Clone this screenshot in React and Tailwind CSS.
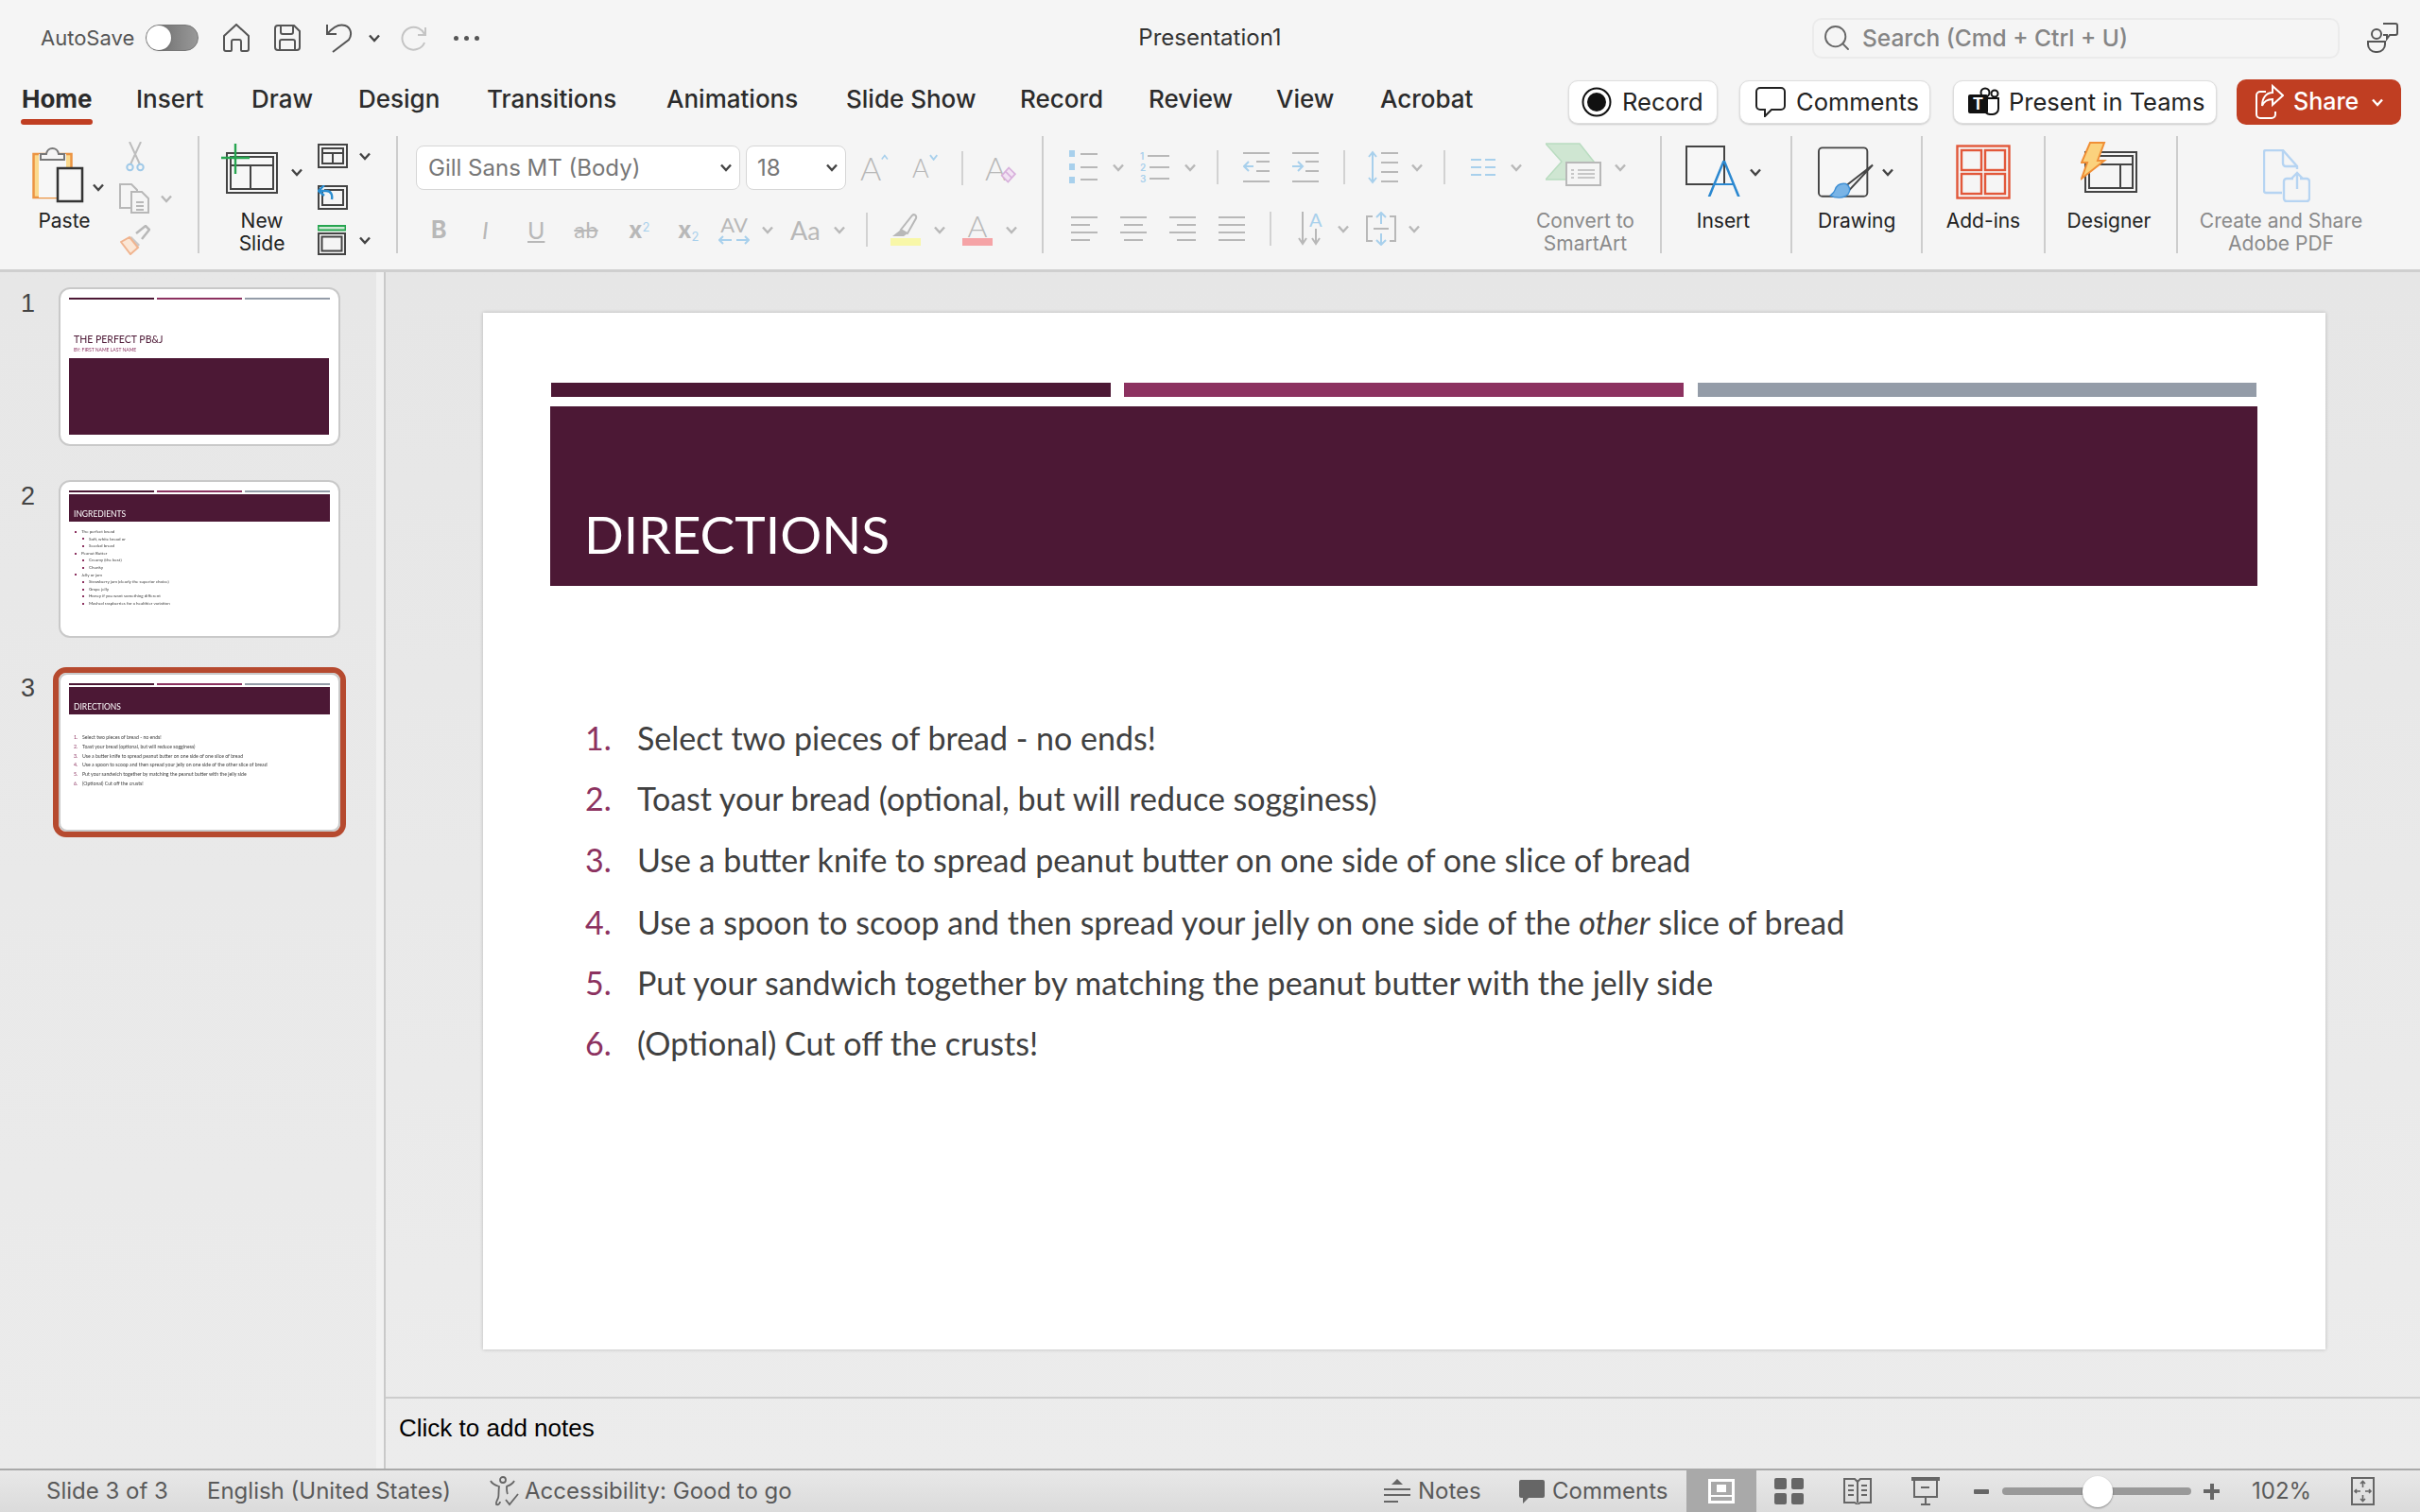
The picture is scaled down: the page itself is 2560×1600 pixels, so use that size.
import React from "react";
import { Search } from "lucide-react";

const GREY = "#b8b8b8";
const BLUE = "#a8d0ec";

const Chev = ({ c = "#444", className = "" }) => (
  <svg width="12" height="9" viewBox="0 0 12 9" className={`shrink-0 ${className}`}>
    <polyline points="1,1.5 6,7 11,1.5" fill="none" stroke={c} strokeWidth="2.4" />
  </svg>
);

const VSep = ({ className = "" }) => <div className={`w-[2px] h-[36px] shrink-0 bg-[#d2d2d2] ${className}`} />;
const GroupSep = () => <div className="w-[2px] h-[124px] mt-[9px] shrink-0 bg-[#cdcdcd]" />;

/* ---- title bar icons ---- */
const HomeIcon = () => (
  <svg width="28" height="30" viewBox="0 0 28 30" className="ml-[26px]" fill="none" stroke="#555" strokeWidth="2">
    <path d="M1 13 14 1l13 12v14a2 2 0 0 1-2 2h-5a1 1 0 0 1-1-1v-9a2 2 0 0 0-2-2h-6a2 2 0 0 0-2 2v9a1 1 0 0 1-1 1H3a2 2 0 0 1-2-2Z" />
  </svg>
);
const SaveIcon = () => (
  <svg width="28" height="28" viewBox="0 0 28 28" className="ml-[26px]" fill="none" stroke="#555" strokeWidth="2">
    <path d="M4 1h17l6 6v17a3 3 0 0 1-3 3H4a3 3 0 0 1-3-3V4a3 3 0 0 1 3-3Z" />
    <path d="M7 1v7a2 2 0 0 0 2 2h9a2 2 0 0 0 2-2V1M6 27v-9a2 2 0 0 1 2-2h12a2 2 0 0 1 2 2v9" />
  </svg>
);
const UndoIcon = () => (
  <svg width="28" height="32" viewBox="0 0 28 32" className="ml-[27px]" fill="none" stroke="#555" strokeWidth="2">
    <path d="M1 2v10h10M1 12C7 5 14 1 20 3c6 2 8 9 4 15L7 31" />
  </svg>
);
const RedoIcon = () => (
  <svg width="28" height="30" viewBox="0 0 28 30" className="ml-[22px]" fill="none" stroke="#c4c4c4" strokeWidth="2">
    <path d="M26 4v8h-8M25 11C22 5 16 3 11 4 4 6 0 12 2 19c2 7 9 10 15 8 4-1 7-4 8-7" />
  </svg>
);
const PersonChat = () => (
  <svg width="33" height="32" viewBox="0 0 33 32" className="ml-[29px]" fill="none" stroke="#555" strokeWidth="2">
    <circle cx="10" cy="12" r="5" />
    <path d="M1 20h18v3a8 8 0 0 1-8 8H9a8 8 0 0 1-8-8ZM17 1h13a2 2 0 0 1 2 2v8a2 2 0 0 1-2 2h-6l-3 4v-4h-4" />
  </svg>
);

/* ---- tab row button icons ---- */
const RecordIcon = () => (
  <svg width="32" height="32" viewBox="0 0 32 32" fill="none">
    <circle cx="16" cy="16" r="14.5" stroke="#111" strokeWidth="2" />
    <circle cx="16" cy="16" r="10" fill="#111" />
  </svg>
);
const CommentIcon = () => (
  <svg width="32" height="32" viewBox="0 0 32 32" fill="none" stroke="#222" strokeWidth="2">
    <path d="M5 1h22a4 4 0 0 1 4 4v15a4 4 0 0 1-4 4H17l-7 7v-7H5a4 4 0 0 1-4-4V5a4 4 0 0 1 4-4Z" />
  </svg>
);
const TeamsIcon = () => (
  <svg width="34" height="32" viewBox="0 0 34 32" fill="none">
    <circle cx="18" cy="6" r="4.5" stroke="#111" strokeWidth="2" />
    <circle cx="28" cy="7" r="3.5" stroke="#111" strokeWidth="2" />
    <path d="M17 12h15v11a6 6 0 0 1-6 6h-3a7 7 0 0 1-6-5" stroke="#111" strokeWidth="2" />
    <rect x="0" y="8" width="21" height="20" rx="2" fill="#111" />
    <text x="10.5" y="24" textAnchor="middle" fontSize="17" fontWeight="700" fontFamily="Inter, sans-serif" fill="#fff">T</text>
  </svg>
);
const ShareIcon = () => (
  <svg width="30" height="40" viewBox="0 0 30 40" fill="none" stroke="#fff" strokeWidth="2" className="shrink-0">
    <path d="M11 9H5a4 4 0 0 0-4 4v20a4 4 0 0 0 4 4h12a4 4 0 0 0 4-4v-3" />
    <path d="M18 3l11 10-11 10v-6c-6 0-9 2-11 7 0-8 4-14 11-14Z" />
  </svg>
);

/* ---- clipboard ---- */
const PasteIcon = () => (
  <svg width="56" height="62" viewBox="0 0 56 62" fill="none">
    <rect x="1.5" y="10" width="40" height="46" fill="#fbd98d" stroke="#ec9442" strokeWidth="2.5" />
    <rect x="7" y="10" width="29" height="46" fill="#f7f7f7" />
    <path d="M9 16v-6h6c1-8 12-8 13 0h6v6Z" fill="#f5f5f5" stroke="#777" strokeWidth="2" />
    <rect x="27" y="25" width="26" height="35" fill="#f7f7f7" stroke="#333" strokeWidth="2.5" />
  </svg>
);
const ScissorsIcon = () => (
  <svg width="20" height="32" viewBox="0 0 20 32" fill="none" className="ml-[31px]">
    <path d="M4 0l11 24M16 0 5 24" stroke="#bdbdbd" strokeWidth="2" />
    <circle cx="4.5" cy="27" r="3.2" stroke="#9fc9e8" strokeWidth="2" />
    <circle cx="15.5" cy="27" r="3.2" stroke="#9fc9e8" strokeWidth="2" />
  </svg>
);
const CopyIcon = () => (
  <svg width="32" height="32" viewBox="0 0 32 32" fill="none" stroke={GREY} strokeWidth="2">
    <path d="M13 26H1V1h12l6 6v2" />
    <path d="M13 9h11l7 7v15H13Z" fill="#f5f5f5" />
    <path d="M18 20h8M18 24h8M18 28h8" />
  </svg>
);
const PainterIcon = () => (
  <svg width="32" height="32" viewBox="0 0 32 32" fill="none" className="ml-[25px] mt-[12px]">
    <path d="M17 9 27 1l4 4-8 10" stroke={GREY} strokeWidth="2.5" />
    <path d="M12 12l9 9-3 3-9-9Z" fill="#c9c9c9" />
    <path d="M1 18l9-5 9 11-8 7Z" fill="#fbe7d6" stroke="#f0b48f" strokeWidth="2" />
  </svg>
);

/* ---- slides group ---- */
const NewSlideIcon = () => (
  <svg width="60" height="56" viewBox="0 0 60 56" fill="none">
    <rect x="6" y="12" width="53" height="42" stroke="#444" strokeWidth="2" fill="#f7f7f7" />
    <rect x="10" y="16" width="45" height="34" stroke="#444" strokeWidth="2" />
    <path d="M10 25h45M31 25v25" stroke="#444" strokeWidth="2" />
    <path d="M0 17h30M15 2v32" stroke="#27a550" strokeWidth="2.4" />
  </svg>
);
const LayoutIcon = () => (
  <svg width="32" height="26" viewBox="0 0 32 26" fill="none" stroke="#444" strokeWidth="2">
    <rect x="1" y="1" width="30" height="24" />
    <rect x="5" y="5" width="22" height="16" />
    <path d="M5 10h22M16 10v11" />
  </svg>
);
const ResetIcon = () => (
  <svg width="32" height="26" viewBox="0 0 32 26" fill="none">
    <rect x="1" y="1" width="30" height="24" stroke="#444" strokeWidth="2" />
    <rect x="5" y="5" width="22" height="16" stroke="#444" strokeWidth="2" />
    <path d="M7 0 1 6l6 5M1 6h8c5 0 7 4 6 9" stroke="#2a8dd0" strokeWidth="2.4" fill="#f5f5f5" />
  </svg>
);
const SectionIcon = () => (
  <svg width="30" height="32" viewBox="0 0 30 32" fill="none">
    <rect x="0.5" y="1" width="29" height="4.5" stroke="#27a550" strokeWidth="2" fill="#cfe9d6" />
    <rect x="1" y="9" width="28" height="22" stroke="#444" strokeWidth="2" />
    <rect x="4.5" y="12.5" width="21" height="15" stroke="#444" strokeWidth="2" />
  </svg>
);

/* ---- font group extras ---- */
const Caret = ({ up }) => (
  <svg width="10" height="7" viewBox="0 0 10 7" className="self-start mt-[2px]">
    <polyline points={up ? "1,6 5,1 9,6" : "1,1 5,6 9,1"} fill="none" stroke={BLUE} strokeWidth="2" />
  </svg>
);
const Eraser = () => (
  <svg width="20" height="20" viewBox="0 0 20 20" className="ml-[-6px] self-end" fill="none">
    <path d="M11 1l8 8-9 10-8-8Z" stroke="#d8b0dc" strokeWidth="2" fill="#f2e3f3" />
    <path d="M7 6l8 8" stroke="#d8b0dc" strokeWidth="2" />
  </svg>
);
const Highlighter = () => (
  <svg width="32" height="34" viewBox="0 0 32 34" className="ml-[24px]" fill="none">
    <path d="M11 17 23 2c2-2 5 0 4 3L18 21Z" stroke={GREY} strokeWidth="2" />
    <path d="M11 17l7 4-4 3H2Z" fill={GREY} />
    <rect x="0" y="26" width="32" height="8" fill="#f8f7a8" />
  </svg>
);

/* ---- paragraph icons ---- */
const Lines = ({ d, className = "" }) => (
  <svg width="28" height="28" viewBox="0 0 28 28" className={className} fill="none" stroke={GREY} strokeWidth="2">
    <path d={d} />
  </svg>
);
const Bullets = () => (
  <svg width="30" height="36" viewBox="0 0 30 36" fill="none">
    <path d="M12 4h18M12 18h18M12 31h18" stroke={GREY} strokeWidth="2" />
    <rect x="0" y="0" width="6" height="7" fill={BLUE} />
    <rect x="0" y="14" width="6" height="7" fill={BLUE} />
    <rect x="0" y="28" width="6" height="7" fill={BLUE} />
  </svg>
);
const Numbers = () => (
  <div className="ml-[17px] w-[31px] h-[36px] flex flex-col justify-between text-[10px] leading-[12px] font-semibold text-[#a8d0ec]">
    {["1", "2", "3"].map((n) => (
      <div key={n} className="flex items-center gap-[4px]">
        <span>{n}</span>
        <div className="flex-1 h-[2px] bg-[#b8b8b8]" />
      </div>
    ))}
  </div>
);
const Indent = ({ out, className }) => (
  <svg width="28" height="36" viewBox="0 0 28 36" className={className} fill="none">
    <path d="M0 3h28M14 12h14M14 22h14M0 33h28" stroke={GREY} strokeWidth="2" />
    <path d={out ? "M11 17H1M6 12l-5 5 5 5" : "M0 17h10M6 12l5 5-5 5"} stroke={BLUE} strokeWidth="2" />
  </svg>
);
const LineSpacing = () => (
  <svg width="32" height="36" viewBox="0 0 32 36" className="ml-[24px]" fill="none">
    <path d="M14 3h18M14 13h18M14 23h18M14 33h18" stroke={GREY} strokeWidth="2" />
    <path d="M5 2v32M1 7l4-5 4 5M1 29l4 5 4-5" stroke={BLUE} strokeWidth="2" />
  </svg>
);
const Columns = () => (
  <svg width="26" height="20" viewBox="0 0 26 20" className="ml-[27px]" fill="none" stroke={BLUE} strokeWidth="2">
    <path d="M0 2h11M15 2h11M0 10h11M15 10h11M0 18h11M15 18h11" />
  </svg>
);
const SmartArtIcon = () => (
  <svg width="60" height="46" viewBox="0 0 60 46" fill="none">
    <path d="M0 1h36l19 24H36v14H0l17-19Z" fill="#cfe6d2" stroke="#b9dcc0" strokeWidth="1.5" />
    <rect x="22" y="21" width="36" height="24" fill="#f5f5f5" stroke={GREY} strokeWidth="2" />
    <path d="M34 29h18M34 33h18M34 37h18" stroke={GREY} strokeWidth="1.5" />
    <path d="M27 29h3M27 33h3M27 37h3" stroke={GREY} strokeWidth="1.5" />
  </svg>
);
const TextDirection = () => (
  <div className="ml-[28px] w-[26px] h-[36px] relative flex">
    <svg width="26" height="36" viewBox="0 0 26 36" fill="none" stroke={GREY} strokeWidth="2">
      <path d="M5 0v34M1 28l4 6 4-6M19 18v16M15 28l4 6 4-6" />
    </svg>
    <span className="absolute left-[12px] top-[-4px] text-[20px] leading-[24px] text-[#a8d0ec] font-['Lato',sans-serif]">A</span>
  </div>
);
const AlignText = () => (
  <svg width="32" height="36" viewBox="0 0 32 36" className="ml-[18px]" fill="none">
    <path d="M7 5H1v26h6M25 5h6v26h-6" stroke={GREY} strokeWidth="2" />
    <path d="M8 18h16" stroke={GREY} strokeWidth="2" />
    <path d="M16 1v12M11 6l5-5 5 5M16 23v12M11 30l5 5 5-5" stroke={BLUE} strokeWidth="2" />
  </svg>
);

/* ---- right side big buttons ---- */
const InsertIcon = () => (
  <div className="relative w-[56px] h-[58px]">
    <div className="w-[42px] h-[42px] border-2 border-[#444] bg-[#f7f7f7]" />
    <span className="absolute left-[23px] top-[7px] text-[54px] leading-[54px] text-[#2b88d0] font-['Lato',sans-serif] font-light">A</span>
  </div>
);
const DrawingIcon = () => (
  <svg width="62" height="60" viewBox="0 0 62 60" fill="none">
    <rect x="1" y="1" width="54" height="54" rx="4" stroke="#444" strokeWidth="2" fill="#f7f7f7" />
    <path d="M61 20 34 49l-5-4Z" fill="#f5f5f5" stroke="#444" strokeWidth="2" />
    <path d="M31 41c-8-1-11 4-12 7-1 3-4 5-5 6 5 3 15 4 20-2 3-4 1-9-3-11Z" fill="#79b4e6" stroke="#3e8fd4" strokeWidth="1.5" />
  </svg>
);
const AddinsIcon = () => (
  <svg width="58" height="58" viewBox="0 0 58 58" fill="none" stroke="#e2583a" strokeWidth="2.4">
    <rect x="1.5" y="1.5" width="55" height="55" />
    <rect x="6" y="6" width="21" height="21" />
    <rect x="31" y="6" width="21" height="21" />
    <rect x="6" y="31" width="21" height="21" />
    <rect x="31" y="31" width="21" height="21" />
  </svg>
);
const DesignerIcon = () => (
  <svg width="60" height="54" viewBox="0 0 60 54" fill="none">
    <rect x="5" y="11" width="54" height="42" stroke="#444" strokeWidth="2" />
    <rect x="9" y="15" width="46" height="34" stroke="#444" strokeWidth="2" />
    <path d="M9 24h46M42 24v25" stroke="#444" strokeWidth="2" />
    <path d="M10 1h15L18 20h7L1 39l6-17H1Z" fill="#fbd27d" stroke="#f08f36" strokeWidth="2" />
  </svg>
);
const PdfIcon = () => (
  <svg width="50" height="56" viewBox="0 0 50 56" fill="none" stroke="#b6d4f2" strokeWidth="2.4">
    <path d="M20 46H3a2 2 0 0 1-2-2V3a2 2 0 0 1 2-2h18l15 17v3" />
    <path d="M21 1v14a3 3 0 0 0 3 3h12" />
    <path d="M32 31h-7a3 3 0 0 0-3 3v18a3 3 0 0 0 3 3h21a3 3 0 0 0 3-3V34a3 3 0 0 0-3-3h-7M36 42V25M30 31l6-6 6 6" />
  </svg>
);

/* ---- status bar icons ---- */
const AccessIcon = () => (
  <svg width="34" height="32" viewBox="0 0 34 32" fill="none" stroke="#666" strokeWidth="1.8" className="ml-[40px]">
    <circle cx="15" cy="4" r="3" />
    <path d="M2 5c2 4 6 5 9 6-1 6 0 9-1 12-1 3-3 5-2 7 2 1 4-1 4-3M27 5c-2 4-6 5-8 6 0 3 0 6 1 8" />
    <path d="M18 25l4 5 9-11" />
  </svg>
);
const NotesIcon = () => (
  <svg width="28" height="26" viewBox="0 0 28 26" fill="none">
    <path d="M14 0l6 6H8Z" fill="#666" />
    <path d="M0 11h28M0 17h28M0 24h15" stroke="#666" strokeWidth="2" />
  </svg>
);
const ChatFill = () => (
  <svg width="27" height="25" viewBox="0 0 27 25">
    <path d="M2 0h23a2 2 0 0 1 2 2v15a2 2 0 0 1-2 2H10l-6 6v-6H2a2 2 0 0 1-2-2V2a2 2 0 0 1 2-2Z" fill="#666" />
  </svg>
);
const NormalView = () => (
  <svg width="28" height="26" viewBox="0 0 28 26" fill="none">
    <rect x="1.5" y="1.5" width="25" height="23" fill="#a9a9a9" stroke="#fff" strokeWidth="3" />
    <rect x="9" y="6" width="10" height="8" fill="#fff" />
    <path d="M1 18h26" stroke="#fff" strokeWidth="2" />
  </svg>
);
const GridView = () => (
  <svg width="31" height="28" viewBox="0 0 31 28" fill="#666" className="ml-[19px]">
    <rect x="0" y="0" width="13" height="12" rx="2" />
    <rect x="18" y="0" width="13" height="12" rx="2" />
    <rect x="0" y="16" width="13" height="12" rx="2" />
    <rect x="18" y="16" width="13" height="12" rx="2" />
  </svg>
);
const BookView = () => (
  <svg width="30" height="28" viewBox="0 0 30 28" fill="none" stroke="#666" strokeWidth="2" className="ml-[42px]">
    <path d="M1 1h11l3 3 3-3h11v25H18l-3 2-3-2H1ZM15 4v22M5 8h6M5 13h6M5 18h6M19 8h6M19 13h6M19 18h6" />
  </svg>
);
const PresentView = () => (
  <svg width="30" height="30" viewBox="0 0 30 30" fill="none" stroke="#666" strokeWidth="2" className="ml-[42px]">
    <path d="M0 2h30" strokeWidth="4" />
    <path d="M3 3v18h24V3M10 11h9M15 21v7M10 29h10" />
  </svg>
);
const FitIcon = () => (
  <svg width="25" height="30" viewBox="0 0 25 30" fill="none" stroke="#666" strokeWidth="1.6">
    <rect x="1" y="1" width="23" height="28" strokeWidth="2" />
    <path d="M12.5 5v6M10 7l2.500-2.500L15 7M12.500 25v-6M10 23l2.500 2.500L15 23M4 15h6M6 13l-2 2 2 2M21 15h-6M19 13l2 2-2 2" />
  </svg>
);

const tabs = [
  { label: "Home", w: "w-[121px]" },
  { label: "Insert", w: "w-[122px]" },
  { label: "Draw", w: "w-[113px]" },
  { label: "Design", w: "w-[136px]" },
  { label: "Transitions", w: "w-[190px]" },
  { label: "Animations", w: "w-[190px]" },
  { label: "Slide Show", w: "w-[184px]" },
  { label: "Record", w: "w-[136px]" },
  { label: "Review", w: "w-[135px]" },
  { label: "View", w: "w-[110px]" },
  { label: "Acrobat", w: "w-[110px]" },
];

const PillBtn = ({ className, children }) => (
  <div className={`h-[46px] flex items-center bg-white rounded-[10px] border border-[#dedede] shadow-[0_1px_2px_rgba(0,0,0,0.18)] text-[25.5px] text-[#222] whitespace-nowrap ${className}`}>
    {children}
  </div>
);

const BigLabel = ({ children, muted }) => (
  <div className={`text-[21px] leading-[24px] text-center ${muted ? "text-[#8a8a8a]" : "text-[#222]"}`}>{children}</div>
);

const TitleBar = () => (
  <div className="h-[80px] grid grid-cols-[1fr_auto_1fr] items-center">
    <div className="flex items-center pl-[43px]">
      <span className="w-[99px] text-[22px] text-[#555] whitespace-nowrap">AutoSave</span>
      <div className="ml-[12px] w-[56px] h-[28px] rounded-full bg-gradient-to-r from-[#666] to-[#999] flex items-center border border-[#777]">
        <div className="w-[26px] h-[26px] rounded-full bg-white shadow" />
      </div>
      <HomeIcon />
      <SaveIcon />
      <UndoIcon />
      <Chev c="#444" className="ml-[17px]" />
      <RedoIcon />
      <div className="ml-[28px] flex gap-[6px]">
        <div className="w-[5px] h-[5px] rounded-full bg-[#555]" />
        <div className="w-[5px] h-[5px] rounded-full bg-[#555]" />
        <div className="w-[5px] h-[5px] rounded-full bg-[#555]" />
      </div>
    </div>
    <div className="text-[24px] text-[#333]">Presentation1</div>
    <div className="flex items-center justify-end pr-[23px]">
      <div className="w-[558px] h-[43px] rounded-[10px] border-2 border-[#ebebeb] flex items-center pl-[8px]">
        <Search size={32} color="#666" strokeWidth={1.4} />
        <span className="ml-[11px] text-[24.500px] font-medium text-[#858585]">Search (Cmd + Ctrl + U)</span>
      </div>
      <PersonChat />
    </div>
  </div>
);

const TabRow = () => (
  <div className="h-[55px] flex justify-between">
    <div className="flex pl-[23px] pt-[10px] text-[26px] font-medium leading-[30px] text-[#2b2b2b]">
      {tabs.map((t) => (
        <div key={t.label} className={`${t.w} whitespace-nowrap`}>
          <span className={t.label === "Home" ? "font-bold" : ""}>{t.label}</span>
          {t.label === "Home" && <div className="mt-[6px] w-[76px] h-[6px] rounded-full bg-[#c03e22] ml-[-1px]" />}
        </div>
      ))}
    </div>
    <div className="flex items-center pr-[20px] pt-[1px]">
      <PillBtn className="w-[158px] pl-[13px] gap-[11px]">
        <RecordIcon />
        <span>Record</span>
      </PillBtn>
      <PillBtn className="ml-[23px] w-[202px] pl-[16px] gap-[11px]">
        <CommentIcon />
        <span>Comments</span>
      </PillBtn>
      <PillBtn className="ml-[24px] w-[279px] pl-[15px] gap-[9px]">
        <TeamsIcon />
        <span>Present in Teams</span>
      </PillBtn>
      <div className="ml-[21px] w-[174px] h-[48px] rounded-[10px] bg-[#c03e22] flex items-center pl-[20px] text-[25px] font-medium text-white">
        <ShareIcon />
        <span className="ml-[10px]">Share</span>
        <Chev c="#fff" className="ml-[14px]" />
      </div>
    </div>
  </div>
);

const Ribbon = () => (
  <div className="h-[150px] flex border-b-[3px] border-[#cfcfcf] box-content">
    {/* Clipboard */}
    <div className="w-[209px] shrink-0 flex pt-[15px] pl-[34px]">
      <div className="w-[68px]">
        <div className="h-[72px] pt-[3px] flex">
          <PasteIcon />
        </div>
        <BigLabel>Paste</BigLabel>
      </div>
      <div className="pt-[44px] ml-[-4px]"><Chev /></div>
      <div className="flex flex-col ml-[-8px]">
        <ScissorsIcon />
        <div className="flex items-center mt-[12px] ml-[24px]">
          <CopyIcon />
          <Chev c={GREY} className="ml-[12px]" />
        </div>
        <PainterIcon />
      </div>
    </div>
    <GroupSep />
    {/* Slides */}
    <div className="w-[208px] shrink-0 flex pt-[15px] pl-[23px]">
      <div className="w-[86px]">
        <div className="h-[72px] flex items-start">
          <NewSlideIcon />
          <Chev className="ml-[14px] mt-[28px]" />
        </div>
        <BigLabel>New<br />Slide</BigLabel>
      </div>
      <div className="ml-[16px] pt-[2px] flex flex-col">
        <div className="flex items-center h-[26px]"><LayoutIcon /><Chev className="ml-[12px]" /></div>
        <div className="flex items-center h-[26px] mt-[18px]"><ResetIcon /></div>
        <div className="flex items-center h-[32px] mt-[16px]"><SectionIcon /><Chev className="ml-[14px]" /></div>
      </div>
    </div>
    <GroupSep />
    {/* Font */}
    <div className="w-[681px] shrink-0 pl-[19px] pt-[19px] flex flex-col">
      <div className="flex items-center h-[47px]">
        <div className="w-[343px] h-[47px] rounded-[8px] bg-white border border-[#d6d6d6] flex items-center justify-between pl-[12px] pr-[8px] text-[24px] text-[#777]">
          <span>Gill Sans MT (Body)</span>
          <Chev />
        </div>
        <div className="ml-[6px] w-[106px] h-[47px] rounded-[8px] bg-white border border-[#d6d6d6] flex items-center justify-between pl-[11px] pr-[8px] text-[24px] text-[#777]">
          <span>18</span>
          <Chev />
        </div>
        <div className="ml-[15px] w-[30px] flex items-center text-[#b8b8b8] text-[34px] leading-[34px] font-['Lato',sans-serif] font-light">
          <span>A</span><Caret up />
        </div>
        <div className="ml-[25px] w-[27px] flex items-center text-[#b8b8b8] text-[27px] leading-[34px] font-['Lato',sans-serif] font-light">
          <span>A</span><Caret />
        </div>
        <VSep className="ml-[25px]" />
        <div className="ml-[23px] w-[33px] flex items-center text-[#b8b8b8] text-[34px] leading-[34px] font-['Lato',sans-serif] font-light">
          <span>A</span><Eraser />
        </div>
      </div>
      <div className="flex items-center h-[50px] mt-[17px] text-[#b8b8b8]">
        <span className="ml-[16px] w-[16px] text-[25px] leading-none font-bold">B</span>
        <span className="ml-[38px] w-[13px] text-[25px] leading-none italic font-['Lato',sans-serif]">I</span>
        <span className="ml-[35px] w-[18px] text-[25px] leading-none underline font-['Lato',sans-serif]">U</span>
        <span className="ml-[28px] w-[32px] text-[24px] leading-none line-through text-center font-['Lato',sans-serif]">ab</span>
        <span className="ml-[29px] w-[23px] text-[25px] leading-none font-bold">x<sup className="text-[13px] text-[#a8d0ec] font-normal">2</sup></span>
        <span className="ml-[29px] w-[21px] text-[25px] leading-none font-bold">x<sub className="text-[13px] text-[#a8d0ec] font-normal">2</sub></span>
        <div className="ml-[22px] w-[33px] flex flex-col items-center">
          <span className="text-[22px] leading-[22px] font-['Lato',sans-serif]">AV</span>
          <svg width="33" height="10" viewBox="0 0 33 10" fill="none" stroke={BLUE} strokeWidth="2">
            <path d="M1 5h13M5 1 1 5l4 4M19 5h13M28 1l4 4-4 4" />
          </svg>
        </div>
        <Chev c={GREY} className="ml-[13px]" />
        <span className="ml-[18px] w-[34px] text-[27px] leading-none font-['Lato',sans-serif]">Aa</span>
        <Chev c={GREY} className="ml-[12px]" />
        <VSep className="ml-[22px]" />
        <Highlighter />
        <Chev c={GREY} className="ml-[14px]" />
        <div className="ml-[18px] w-[32px] flex flex-col items-center">
          <span className="text-[32px] leading-[26px] font-['Lato',sans-serif] font-light">A</span>
          <div className="w-[32px] h-[8px] bg-[#f5a3a6]" />
        </div>
        <Chev c={GREY} className="ml-[14px]" />
      </div>
    </div>
    <GroupSep />
    {/* Paragraph */}
    <div className="w-[652px] shrink-0 flex pl-[27px] pt-[24px]">
      <div className="w-[490px] flex flex-col">
        <div className="flex items-center h-[36px]">
          <Bullets />
          <Chev c={GREY} className="ml-[16px]" />
          <Numbers />
          <Chev c={GREY} className="ml-[16px]" />
          <VSep className="ml-[22px]" />
          <Indent out className="ml-[26px]" />
          <Indent className="ml-[24px]" />
          <VSep className="ml-[26px]" />
          <LineSpacing />
          <Chev c={GREY} className="ml-[14px]" />
          <VSep className="ml-[22px]" />
          <Columns />
          <Chev c={GREY} className="ml-[16px]" />
        </div>
        <div className="flex items-center h-[36px] mt-[29px] pl-[2px]">
          <Lines d="M0 2h28M0 10h20M0 18h28M0 26h20" />
          <Lines className="ml-[24px]" d="M0 2h28M4 10h20M0 18h28M4 26h20" />
          <Lines className="ml-[24px]" d="M0 2h28M8 10h20M0 18h28M8 26h20" />
          <Lines className="ml-[24px]" d="M0 2h28M0 10h28M0 18h28M0 26h28" />
          <VSep className="ml-[26px]" />
          <TextDirection />
          <Chev c={GREY} className="ml-[16px]" />
          <AlignText />
          <Chev c={GREY} className="ml-[13px]" />
        </div>
      </div>
      <div className="w-[112px] mt-[-9px]">
        <div className="h-[72px] pl-[14px] flex items-start pt-[1px]">
          <SmartArtIcon />
          <Chev c={GREY} className="ml-[13px] mt-[22px]" />
        </div>
        <div className="whitespace-nowrap"><BigLabel muted>Convert to<br />SmartArt</BigLabel></div>
      </div>
    </div>
    <GroupSep />
    {/* Insert */}
    <div className="w-[136px] shrink-0 pt-[15px] pl-[25px]">
      <div className="w-[80px]">
        <div className="h-[72px] pt-[4px] flex items-start">
          <InsertIcon />
          <Chev className="ml-[16px] mt-[24px]" />
        </div>
        <BigLabel>Insert</BigLabel>
      </div>
    </div>
    <GroupSep />
    {/* Drawing */}
    <div className="w-[136px] shrink-0 pt-[15px] pl-[27px]">
      <div className="w-[80px]">
        <div className="h-[72px] pt-[4px] flex items-start">
          <DrawingIcon />
          <Chev className="ml-[9px] mt-[24px]" />
        </div>
        <BigLabel>Drawing</BigLabel>
      </div>
    </div>
    <GroupSep />
    {/* Add-ins */}
    <div className="w-[128px] shrink-0 pt-[15px] flex flex-col items-center">
      <div className="h-[72px] pt-[3px]"><AddinsIcon /></div>
      <BigLabel>Add-ins</BigLabel>
    </div>
    <GroupSep />
    {/* Designer */}
    <div className="w-[138px] shrink-0 pt-[15px] pr-[4px] flex flex-col items-center">
      <div className="h-[72px]"><DesignerIcon /></div>
      <BigLabel>Designer</BigLabel>
    </div>
    <GroupSep />
    {/* Adobe */}
    <div className="w-[218px] shrink-0 pt-[15px] flex flex-col items-center">
      <div className="h-[72px] pt-[8px] pl-[12px]"><PdfIcon /></div>
      <div className="whitespace-nowrap"><BigLabel muted>Create and Share<br />Adobe PDF</BigLabel></div>
    </div>
  </div>
);

const ThumbBars = () => (
  <div className="flex gap-[3px]">
    <div className="w-[90px] h-[2px] bg-[#4c1835]" />
    <div className="w-[90px] h-[2px] bg-[#8c3260]" />
    <div className="w-[90px] h-[2px] bg-[#949ca8]" />
  </div>
);

const ThumbTitle = ({ children, className }) => (
  <div className={`mt-[2px] w-[276px] h-[29px] bg-[#4c1835] pl-[5px] pt-[15px] text-[8.500px] leading-[12px] text-white ${className}`}>{children}</div>
);

const ingredients = [
  ["The perfect bread", 0],
  ["Soft, white bread or", 1],
  ["Seeded bread", 1],
  ["Peanut Butter", 0],
  ["Creamy (the best)", 1],
  ["Chunky", 1],
  ["Jelly or jam", 0],
  ["Strawberry jam (clearly the superior choice)", 1],
  ["Grape jelly", 1],
  ["Honey if you want something different", 1],
  ["Mashed raspberries for a healthier variation", 1],
];

const steps = [
  { text: <>Select two pieces of bread - no ends!</>, plain: "Select two pieces of bread - no ends!", h: "h-[64px]" },
  { text: <>Toast your bread (optional, but will reduce sogginess)</>, plain: "Toast your bread (optional, but will reduce sogginess)", h: "h-[65px]" },
  { text: <>Use a butter knife to spread peanut butter on one side of one slice of bread</>, plain: "Use a butter knife to spread peanut butter on one side of one slice of bread", h: "h-[66px]" },
  { text: <>Use a spoon to scoop and then spread your jelly on one side of the <em>other</em> slice of bread</>, plain: "Use a spoon to scoop and then spread your jelly on one side of the other slice of bread", h: "h-[64px]" },
  { text: <>Put your sandwich together by matching the peanut butter with the jelly side</>, plain: "Put your sandwich together by matching the peanut butter with the jelly side", h: "h-[64px]" },
  { text: <>(Optional) Cut off the crusts!</>, plain: "(Optional) Cut off the crusts!", h: "h-[64px]" },
];

const Sidebar = () => (
  <div className="w-[398px] shrink-0 bg-gradient-to-b from-[#e7e7e7] to-[#ebebeb] font-['Lato',sans-serif]">
    <div className="flex mt-[16px] ml-[22px]">
      <span className="w-[40px] text-[27px] leading-[34px] text-[#444] font-['Liberation_Sans',sans-serif]">1</span>
      <div className="w-[298px] h-[168px] rounded-[12px] border-2 border-[#c9c9c9] bg-white pl-[9px] pt-[9px] blur-[0.3px]">
        <ThumbBars />
        <div className="pl-[5px] pt-[35px] text-[10.500px] leading-[14px] text-[#4c1835]">THE PERFECT PB&amp;J</div>
        <div className="pl-[5px] text-[5px] leading-[8px] text-[#8c3260]">BY: FIRST NAME LAST NAME</div>
        <div className="mt-[5px] w-[275px] h-[81px] bg-[#4c1835]" />
      </div>
    </div>
    <div className="flex mt-[36px] ml-[22px]">
      <span className="w-[40px] text-[27px] leading-[34px] text-[#444] font-['Liberation_Sans',sans-serif]">2</span>
      <div className="w-[298px] h-[167px] rounded-[12px] border-2 border-[#c9c9c9] bg-white pl-[9px] pt-[9px] blur-[0.3px]">
        <ThumbBars />
        <ThumbTitle>INGREDIENTS</ThumbTitle>
        <div className="pl-[6px] pt-[7px] text-[4.500px] leading-[7.600px] text-[#404040]">
          {ingredients.map(([t, lvl]) => (
            <div key={t} className={`flex items-center gap-[5px] ${lvl ? "pl-[8px]" : ""}`}>
              <div className="w-[2px] h-[2px] bg-[#8c3260]" />
              <span>{t}</span>
            </div>
          ))}
        </div>
      </div>
    </div>
    <div className="flex mt-[31px] ml-[22px]">
      <span className="w-[34px] text-[27px] leading-[34px] text-[#444] font-['Liberation_Sans',sans-serif] pt-[5px]">3</span>
      <div className="w-[310px] h-[180px] rounded-[14px] border-[6px] border-[#b64a2f]">
        <div className="w-[298px] h-[168px] rounded-[9px] border-2 border-[#c9c9c9] bg-white pl-[9px] pt-[9px] blur-[0.3px]">
          <ThumbBars />
          <ThumbTitle>DIRECTIONS</ThumbTitle>
          <div className="pl-[5px] pt-[20px] text-[5.200px] leading-[9.800px] text-[#404040]">
            {steps.map((s, i) => (
              <div key={s.plain} className="flex whitespace-nowrap">
                <span className="w-[9px] text-[#8c3260]">{i + 1}.</span>
                <span>{s.plain}</span>
              </div>
            ))}
          </div>
        </div>
      </div>
    </div>
  </div>
);

const Slide = () => (
  <div className="w-[1949px] h-[1097px] bg-white shadow-[0_0_4px_rgba(0,0,0,0.22)] pt-[74px] pl-[71px] font-['Lato',sans-serif]">
    <div className="flex pl-[1px]">
      <div className="w-[592px] h-[15px] bg-[#4c1835]" />
      <div className="ml-[14px] w-[592px] h-[15px] bg-[#8c3260]" />
      <div className="ml-[15px] w-[591px] h-[15px] bg-[#949ca8]" />
    </div>
    <div className="mt-[10px] w-[1806px] h-[190px] bg-[#4c1835] flex items-end pl-[36px] pb-[23px]">
      <span className="text-[55px] leading-[64px] text-white">DIRECTIONS</span>
    </div>
    <ol className="mt-[129px]">
      {steps.map((s, i) => (
        <li key={s.plain} className={`flex text-[34px] leading-[64px] text-[#404040] whitespace-nowrap ${s.h}`}>
          <span className="w-[55px] pl-[37px] box-content text-[#8c3260]">{i + 1}.</span>
          <span>{s.text}</span>
        </li>
      ))}
    </ol>
  </div>
);

const StatusBar = () => (
  <div className="h-[46px] shrink-0 border-t-[2px] border-[#a9a9a9] bg-gradient-to-b from-[#e8e8e8] to-[#dbdbdb] flex items-center justify-between text-[24px] text-[#5a5a5a]">
    <div className="flex items-center pl-[49px]">
      <span className="w-[127px] whitespace-nowrap">Slide 3 of 3</span>
      <span className="ml-[43px] w-[258px] whitespace-nowrap">English (United States)</span>
      <AccessIcon />
      <span className="ml-[4px] whitespace-nowrap">Accessibility: Good to go</span>
    </div>
    <div className="flex items-center pr-[48px] h-full">
      <NotesIcon />
      <span className="ml-[8px] w-[67px]">Notes</span>
      <div className="ml-[40px]"><ChatFill /></div>
      <span className="ml-[8px] w-[121px]">Comments</span>
      <div className="ml-[21px] w-[74px] h-full bg-[#a9a9a9] flex items-center justify-center">
        <NormalView />
      </div>
      <GridView />
      <BookView />
      <PresentView />
      <div className="ml-[36px] w-[16px] h-[5px] rounded-[1px] bg-[#666]" />
      <div className="ml-[14px] relative w-[200px] h-[8px] rounded-full bg-[#999]">
        <div className="absolute left-[85px] top-[-12px] w-[32px] h-[33px] rounded-full bg-white shadow-[0_1px_2px_rgba(0,0,0,0.4)]" />
      </div>
      <div className="ml-[13px] w-[17px] h-[17px] flex items-center justify-center relative">
        <div className="w-[17px] h-[4px] bg-[#666]" />
        <div className="absolute w-[4px] h-[17px] bg-[#666]" />
      </div>
      <span className="ml-[34px] w-[63px] whitespace-nowrap">102%</span>
      <div className="ml-[42px]"><FitIcon /></div>
    </div>
  </div>
);

const App = () => (
  <div className="w-[2560px] h-screen overflow-hidden flex flex-col bg-[#f5f5f5] font-['Inter',sans-serif]">
    <TitleBar />
    <TabRow />
    <Ribbon />
    <div className="flex-1 flex min-h-0">
      <Sidebar />
      <div className="w-[8px] shrink-0 bg-[#f1f1f1] border-r-2 border-[#c9c9c9] box-content" />
      <div className="flex-1 flex flex-col bg-gradient-to-b from-[#e6e6e6] to-[#ececec] min-w-0">
        <div className="flex-1 pt-[43px] pl-[103px]">
          <Slide />
        </div>
        <div className="h-[76px] shrink-0 border-t-2 border-[#cdcdcd] pl-[14px] pt-[16px] text-[26px] leading-[30px] text-black font-['Liberation_Sans',sans-serif]">
          Click to add notes
        </div>
      </div>
    </div>
    <StatusBar />
  </div>
);

export default App;
